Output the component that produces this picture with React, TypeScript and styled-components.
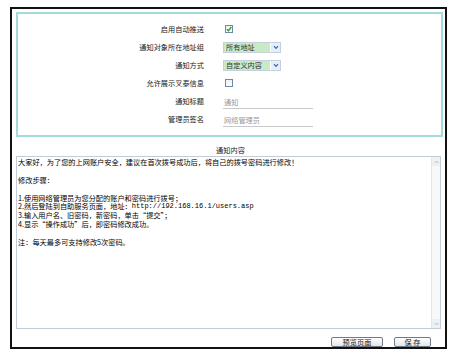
import React from "react";
import styled, { createGlobalStyle } from "styled-components";

const GlobalStyle = createGlobalStyle`
  html, body { margin: 0; padding: 0; background: #ffffff; }
  body { font-family: "Noto Sans CJK SC", "Noto Sans", sans-serif; }
  * { box-sizing: border-box; }
`;

const CJK = `"Noto Sans CJK SC", "Noto Sans", sans-serif`;

const Frame = styled.div`
  margin: 7px 0 0 10px;
  width: 437px;
  height: 342px;
  border: 2px solid #111;
  padding: 3px 2px 0 4px;
  display: flex;
  flex-direction: column;
`;

const SettingsBox = styled.div`
  height: 125px;
  border: 2px solid #a4dada;
  padding: 6px 0 0 0;
`;

const FormGrid = styled.div`
  display: grid;
  grid-template-columns: 186px 1fr;
  grid-auto-rows: 18px;
  column-gap: 19px;
  align-items: center;
`;

const Label = styled.div`
  font-family: ${CJK};
  font-size: 7.2px;
  color: #222;
  text-align: right;
  line-height: 18px;
  white-space: nowrap;
`;

const Cell = styled.div`
  display: flex;
  align-items: center;
  height: 18px;
`;

const Box = styled.span`
  display: inline-flex;
  align-items: center;
  justify-content: center;
  margin-left: 2px;
  width: 8px;
  height: 8px;
  border: 1px solid #6f87a8;
  background: linear-gradient(#eef2f6, #ffffff);
`;

const SelectBox = styled.div`
  display: flex;
  width: 58px;
  height: 11px;
  border: 1px solid #c4d0dc;
  background: #fff;
`;

const SelectValue = styled.div`
  flex: 1;
  background: #c8ebc6;
  font-family: ${CJK};
  font-size: 7.2px;
  line-height: 9px;
  color: #333;
  padding-left: 2px;
  white-space: nowrap;
  overflow: hidden;
`;

const SelectArrow = styled.div`
  width: 10px;
  display: flex;
  align-items: center;
  justify-content: center;
  background: #e6eef8;
  border-left: 1px solid #ffffff;
`;

const LineInput = styled.div`
  width: 90px;
  height: 13px;
  border-bottom: 1px solid #c9c9c9;
  font-family: ${CJK};
  font-size: 7.2px;
  line-height: 12px;
  color: #9a9a9a;
  padding-left: 1px;
  margin-top: 2px;
`;

const Caption = styled.div`
  margin-top: 8px;
  height: 11px;
  width: 425px;
  font-family: ${CJK};
  font-size: 7.2px;
  line-height: 11px;
  color: #222;
  text-align: center;
  padding-left: 4px;
`;

const TextBox = styled.div`
  width: 425px;
  height: 173px;
  border: 1px solid #c3ccd6;
  display: flex;
`;

const TextContent = styled.div`
  flex: 1;
  padding: 1px 1px 0 1px;
  display: flex;
  flex-direction: column;
`;

const Line = styled.div`
  height: 8.9px;
  font-family: ${CJK};
  font-size: 7.2px;
  line-height: 8.9px;
  color: #000;
  white-space: nowrap;
`;

const Url = styled.span`
  display: inline-block;
  vertical-align: top;
  height: 8.9px;
  font-family: "Liberation Mono", monospace;
  font-size: 7px;
  line-height: 8.9px;
`;

const ScrollTrack = styled.div`
  width: 9px;
  background: #f7f8fa;
  border-left: 1px solid #e4e8ec;
  display: flex;
  flex-direction: column;
  justify-content: space-between;
`;

const ScrollBtn = styled.div`
  height: 9px;
  display: flex;
  align-items: center;
  justify-content: center;
  background: #eef1f4;
`;

const ButtonBar = styled.div`
  display: flex;
  justify-content: flex-end;
  gap: 11px;
  padding: 8px 12px 0 0;
`;

const Button = styled.div<{ $w: number }>`
  width: ${(p) => p.$w}px;
  height: 10px;
  border: 1px solid #6f7b86;
  border-radius: 2px;
  background: linear-gradient(#ffffff, #e4e6e9);
  font-family: ${CJK};
  font-size: 7.2px;
  line-height: 8px;
  color: #222;
  text-align: center;
  white-space: pre;
`;

const Check = () => (
  <svg width="6" height="6" viewBox="0 0 6 6">
    <path d="M0.8 3.2 L2.4 4.8 L5.3 1" stroke="#1f9a2a" strokeWidth="1.3" fill="none" />
  </svg>
);

const Chevron = () => (
  <svg width="6" height="5" viewBox="0 0 6 5">
    <path d="M1 1.2 L3 3.4 L5 1.2" stroke="#3568b8" strokeWidth="1.2" fill="none" />
  </svg>
);

const Arrow = ({ up }: { up?: boolean }) => (
  <svg width="5" height="4" viewBox="0 0 5 4">
    <path d={up ? "M0.5 3.2 L2.5 1 L4.5 3.2" : "M0.5 0.8 L2.5 3 L4.5 0.8"} stroke="#b5bcc4" strokeWidth="1" fill="none" />
  </svg>
);

const Select = ({ value }: { value: string }) => (
  <SelectBox>
    <SelectValue>{value}</SelectValue>
    <SelectArrow>
      <Chevron />
    </SelectArrow>
  </SelectBox>
);

const lines: React.ReactNode[] = [
  "大家好，为了您的上网账户安全，建议在首次拨号成功后，将自己的拨号密码进行修改！",
  "",
  "修改步骤：",
  "",
  "1.使用网络管理员为您分配的账户和密码进行拨号；",
  <>
    2.然后登陆到自助服务页面，地址：<Url>http://192.168.16.1/users.asp</Url>
  </>,
  "3.输入用户名、旧密码，新密码，单击“提交”；",
  "4.显示“操作成功”后，即密码修改成功。",
  "",
  "注：每天最多可支持修改5次密码。",
];

export default function App() {
  return (
    <>
      <GlobalStyle />
      <Frame>
        <SettingsBox>
          <FormGrid>
            <Label>启用自动推送</Label>
            <Cell>
              <Box>
                <Check />
              </Box>
            </Cell>
            <Label>通知对象所在地址组</Label>
            <Cell>
              <Select value="所有地址" />
            </Cell>
            <Label>通知方式</Label>
            <Cell>
              <Select value="自定义内容" />
            </Cell>
            <Label>允许展示叉泰信息</Label>
            <Cell>
              <Box />
            </Cell>
            <Label>通知标题</Label>
            <Cell>
              <LineInput>通知</LineInput>
            </Cell>
            <Label>管理员签名</Label>
            <Cell>
              <LineInput>网络管理员</LineInput>
            </Cell>
          </FormGrid>
        </SettingsBox>
        <Caption>通知内容</Caption>
        <TextBox>
          <TextContent>
            {lines.map((l, i) => (
              <Line key={i}>{l}</Line>
            ))}
          </TextContent>
          <ScrollTrack>
            <ScrollBtn>
              <Arrow up />
            </ScrollBtn>
            <ScrollBtn>
              <Arrow />
            </ScrollBtn>
          </ScrollTrack>
        </TextBox>
        <ButtonBar>
          <Button $w={52}>预览页面</Button>
          <Button $w={37}>{"保 存"}</Button>
        </ButtonBar>
      </Frame>
    </>
  );
}
